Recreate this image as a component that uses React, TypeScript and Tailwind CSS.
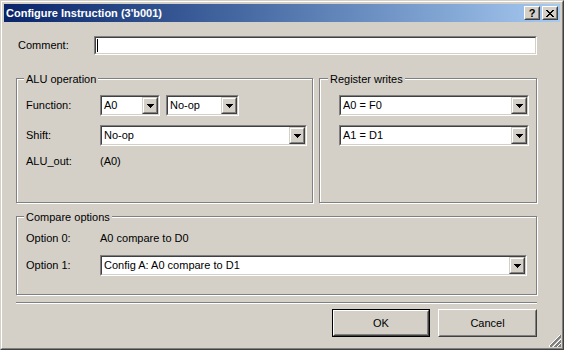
import React from "react";

const Arrow = () => (
  <svg width="7" height="4" viewBox="0 0 7 4" shapeRendering="crispEdges">
    <rect x="0" y="0" width="7" height="1" fill="#000" />
    <rect x="1" y="1" width="5" height="1" fill="#000" />
    <rect x="2" y="2" width="3" height="1" fill="#000" />
    <rect x="3" y="3" width="1" height="1" fill="#000" />
  </svg>
);

// Combo box hundido con boton de flecha
const Combo: React.FC<{ value: string; className: string }> = ({ value, className }) => (
  <div className={`flex h-[21px] border border-t-[#808080] border-l-[#808080] border-b-white border-r-white ${className}`}>
    <div className="flex flex-1 items-center border border-t-[#404040] border-l-[#404040] border-b-[#d4d0c8] border-r-[#d4d0c8] bg-white">
      <span className="flex-1 pl-[2px] leading-[13px]">{value}</span>
      <div className="flex h-[17px] w-[16px] border border-t-[#d4d0c8] border-l-[#d4d0c8] border-b-[#404040] border-r-[#404040]">
        <div className="flex flex-1 items-center justify-center border border-t-white border-l-white border-b-[#808080] border-r-[#808080] bg-[#d4d0c8]">
          <Arrow />
        </div>
      </div>
    </div>
  </div>
);

const GroupBox: React.FC<{ title: string; className: string; labelLeft: string; children: React.ReactNode }> = ({
  title,
  className,
  labelLeft,
  children,
}) => (
  <div className={`relative border border-[#808080] shadow-[inset_1px_1px_0_#fff,1px_1px_0_#fff] ${className}`}>
    <span className={`absolute -top-[6px] ${labelLeft} bg-[#d4d0c8] px-[2px] leading-[13px]`}>{title}</span>
    {children}
  </div>
);

const Button: React.FC<{ label: string; isDefault?: boolean; className: string }> = ({ label, isDefault, className }) =>
  isDefault ? (
    <div className={`flex h-[28px] border border-black ${className}`}>
      <div className="flex flex-1 border border-t-white border-l-white border-b-[#404040] border-r-[#404040]">
        <div className="flex flex-1 items-center justify-center border border-t-[#d4d0c8] border-l-[#d4d0c8] border-b-[#808080] border-r-[#808080]">
          {label}
        </div>
      </div>
    </div>
  ) : (
    <div className={`flex h-[28px] border border-t-white border-l-white border-b-[#404040] border-r-[#404040] ${className}`}>
      <div className="flex flex-1 items-center justify-center border border-t-[#d4d0c8] border-l-[#d4d0c8] border-b-[#808080] border-r-[#808080]">
        {label}
      </div>
    </div>
  );

const CaptionButton: React.FC<{ children: React.ReactNode }> = ({ children }) => (
  <div className="flex h-[14px] w-[16px] border border-t-white border-l-white border-b-[#404040] border-r-[#404040]">
    <div className="flex flex-1 items-center justify-center border border-t-[#d4d0c8] border-l-[#d4d0c8] border-b-[#808080] border-r-[#808080] bg-[#d4d0c8]">
      {children}
    </div>
  </div>
);

export default function App() {
  return (
    <div className="h-[350px] w-[564px] border border-t-[#d4d0c8] border-l-[#d4d0c8] border-b-[#404040] border-r-[#404040] font-['Liberation_Sans',Arial,sans-serif] text-[11px] text-black">
      <div className="relative flex h-full flex-col border border-t-white border-l-white border-b-[#808080] border-r-[#808080] bg-[#d4d0c8] p-[2px]">
        {/* Barra de titulo */}
        <div className="flex h-[18px] items-center bg-gradient-to-r from-[#0a246a] to-[#a6caf0] pl-[2px] pr-[2px]">
          <span className="flex-1 font-bold text-white leading-[13px]">Configure Instruction (3'b001)</span>
          <div className="flex gap-[2px]">
            <CaptionButton>
              <span className="text-[11px] font-bold leading-[10px]">?</span>
            </CaptionButton>
            <CaptionButton>
              <svg width="8" height="7" viewBox="0 0 8 7" shapeRendering="crispEdges">
                <path d="M0 0h2v1h-2zM6 0h2v1h-2zM1 1h2v1h-2zM5 1h2v1h-2zM2 2h4v1h-4zM3 3h2v1h-2zM2 4h4v1h-4zM1 5h2v1h-2zM5 5h2v1h-2zM0 6h2v1h-2zM6 6h2v1h-2z" fill="#000" />
              </svg>
            </CaptionButton>
          </div>
        </div>

        <div className="flex w-[533px] flex-col pl-[12px]">
          {/* Comentario */}
          <div className="mt-[14px] flex h-[19px] items-center">
            <span className="w-[78px] pl-[2px]">Comment:</span>
            <div className="flex h-[19px] w-[443px] border border-t-[#808080] border-l-[#808080] border-b-white border-r-white">
              <div className="flex flex-1 items-center border border-t-[#404040] border-l-[#404040] border-b-[#d4d0c8] border-r-[#d4d0c8] bg-white">
                <span className="ml-[1px] h-[13px] w-[1px] bg-black" />
              </div>
            </div>
          </div>

          <div className="mt-[23px] flex gap-[6px]">
            <GroupBox title="ALU operation" className="h-[125px] w-[297px] pl-[9px] pt-[16px]" labelLeft="left-[7px]">
              <div className="flex h-[21px] items-center">
                <span className="w-[74px]">Function:</span>
                <Combo value="A0" className="w-[60px]" />
                <Combo value="No-op" className="ml-[6px] w-[73px]" />
              </div>
              <div className="mt-[9px] flex h-[21px] items-center">
                <span className="w-[74px]">Shift:</span>
                <Combo value="No-op" className="w-[207px]" />
              </div>
              <div className="mt-[9px] flex h-[13px] items-center leading-[13px]">
                <span className="w-[74px]">ALU_out:</span>
                <span>(A0)</span>
              </div>
            </GroupBox>

            <GroupBox title="Register writes" className="h-[125px] w-[218px] pl-[19px] pt-[16px]" labelLeft="left-[8px]">
              <Combo value="A0 = F0" className="w-[190px]" />
              <Combo value="A1 = D1" className="mt-[9px] w-[190px]" />
            </GroupBox>
          </div>

          <GroupBox title="Compare options" className="mt-[13px] h-[79px] w-[521px] pl-[9px] pt-[15px]" labelLeft="left-[7px]">
            <div className="flex h-[13px] items-center leading-[13px]">
              <span className="w-[74px]">Option 0:</span>
              <span>A0 compare to D0</span>
            </div>
            <div className="mt-[10px] flex h-[21px] items-center">
              <span className="w-[74px]">Option 1:</span>
              <Combo value="Config A: A0 compare to D1" className="w-[427px]" />
            </div>
          </GroupBox>

          {/* Separador */}
          <div className="mt-[7px] h-[2px] w-[521px] border-t border-b border-t-[#808080] border-b-white" />

          <div className="mt-[5px] flex w-[521px] justify-end gap-[8px]">
            <Button label="OK" isDefault className="w-[98px]" />
            <Button label="Cancel" className="w-[99px]" />
          </div>
        </div>

        {/* Agarre de redimension */}
        <svg className="absolute bottom-[1px] right-[1px]" width="12" height="12" viewBox="0 0 12 12" shapeRendering="crispEdges">
          <g strokeWidth="1">
            <line x1="11" y1="0.5" x2="0" y2="11.5" stroke="#fff" />
            <line x1="12" y1="0.5" x2="1" y2="11.5" stroke="#808080" />
            <line x1="12" y1="1.5" x2="2" y2="11.5" stroke="#808080" />
            <line x1="12" y1="4.5" x2="4" y2="12.5" stroke="#fff" />
            <line x1="12" y1="5.5" x2="5" y2="12.5" stroke="#808080" />
            <line x1="12" y1="6.5" x2="6" y2="12.5" stroke="#808080" />
            <line x1="12" y1="8.5" x2="8" y2="12.5" stroke="#fff" />
            <line x1="12" y1="9.5" x2="9" y2="12.5" stroke="#808080" />
            <line x1="12" y1="10.5" x2="10" y2="12.5" stroke="#808080" />
          </g>
        </svg>
      </div>
    </div>
  );
}
